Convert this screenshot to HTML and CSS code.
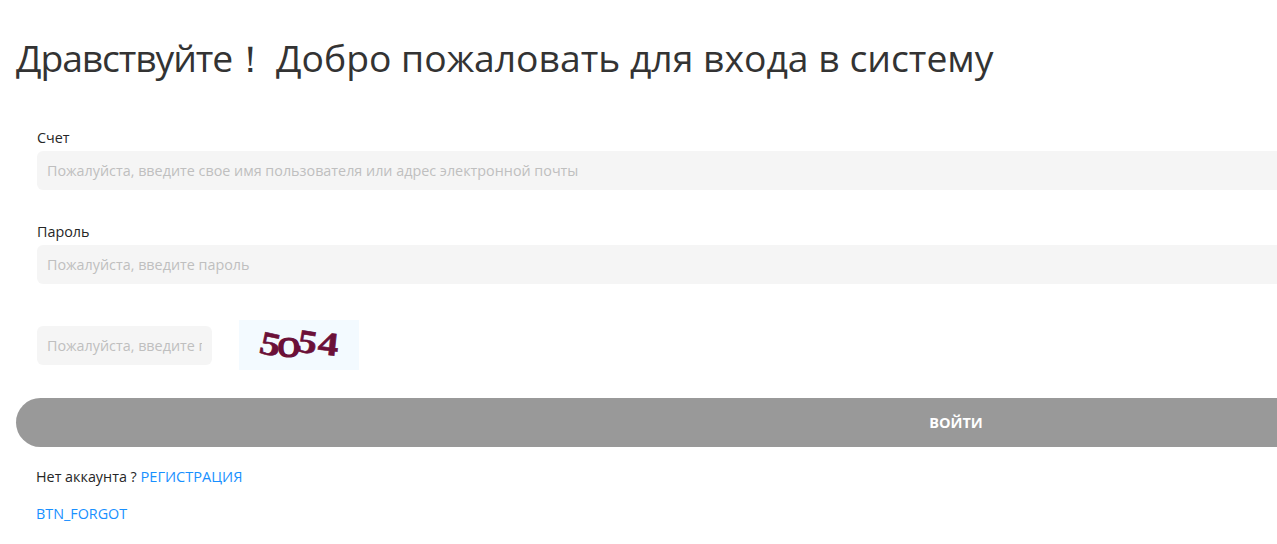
FILE: index.html
```html
<!DOCTYPE html>
<html lang="ru">
<head>
    <meta charset="UTF-8">
    <meta name="viewport" content="width=device-width, initial-scale=1.0">
    <title>Вход</title>
    <link rel="stylesheet" href="styles.css">
</head>
<body>
    <div class="login">
        <h1 class="login-title"><span class="greeting">Дравствуйте！</span>Добро пожаловать для входа в систему</h1>
        <form class="login-form">
            <div class="field">
                <label class="field-label" for="account">Счет</label>
                <input class="field-input" id="account" type="text" placeholder="Пожалуйста, введите свое имя пользователя или адрес электронной почты">
            </div>
            <div class="field">
                <label class="field-label" for="password">Пароль</label>
                <input class="field-input" id="password" type="password" placeholder="Пожалуйста, введите пароль">
            </div>
            <div class="captcha-row">
                <input class="field-input captcha-input" type="text" placeholder="Пожалуйста, введите проверочный код">
                <div class="captcha-img">
                    <span class="d1">5</span><span class="d2">0</span><span class="d3">5</span><span class="d4">4</span>
                </div>
            </div>
            <button class="submit-btn" type="button">ВОЙТИ</button>
        </form>
        <p class="login-link">Нет аккаунта ? <a href="#">РЕГИСТРАЦИЯ</a></p>
        <p class="login-link forgot"><a href="#">BTN_FORGOT</a></p>
    </div>
</body>
</html>
```

FILE: styles.css
```css
html, body {
    margin: 0;
    height: 100%;
    overflow: hidden;
    background: #fff;
}
body {
    font-family: "Open Sans", "Noto Sans", sans-serif;
    font-size: 14.35px;
    color: #333;
}
.login {
    width: 1880px;
    margin-left: 16px;
    padding-top: 32px;
}
.login-title {
    margin: 0;
    font-size: 37.3px;
    font-weight: 400;
    line-height: 52px;
    white-space: nowrap;
}
.greeting {
    display: inline-block;
    width: 260px;
    letter-spacing: -1.1px;
}
.login-form {
    margin-top: 44px;
}
.field {
    padding-left: 21px;
    margin-bottom: 32px;
}
.field-label {
    display: block;
    height: 20px;
    line-height: 20px;
    margin-bottom: 3px;
    color: #262626;
}
.field-input {
    display: block;
    box-sizing: border-box;
    width: 100%;
    height: 39px;
    padding: 0 10px;
    border: none;
    outline: none;
    border-radius: 6px;
    background: #f5f5f5;
    font-family: inherit;
    font-size: 14.35px;
}
.field-input::placeholder {
    color: #bfbfbf;
    opacity: 1;
}
.captcha-row {
    display: flex;
    align-items: center;
    gap: 27px;
    padding-left: 21px;
    margin-top: 36px;
}
.captcha-input {
    width: 175px;
}
.captcha-img {
    display: flex;
    justify-content: center;
    align-items: center;
    width: 120px;
    height: 50px;
    background: #f3faff;
    color: #6b1038;
    font-family: "Liberation Serif", serif;
    font-size: 33px;
    font-weight: 700;
    line-height: 1;
    -webkit-text-stroke: 0.6px #6b1038;
}
.captcha-img span {
    display: block;
}
.captcha-img .d1 {
    transform: translateY(-1px) rotate(12deg) scaleX(1.25);
    margin-right: 3px;
}
.captcha-img .d2 {
    transform: translateY(3px) scaleX(1.45);
    font-family: "Liberation Sans", sans-serif;
    font-size: 28px;
    font-weight: 400;
    -webkit-text-stroke: 1.2px #6b1038;
    margin-right: 2px;
}
.captcha-img .d3 {
    transform: translateY(-3px) rotate(10deg) scaleX(1.2);
    margin-right: 4px;
}
.captcha-img .d4 {
    transform: translateY(-1px) rotate(6deg) scaleX(1.25);
}
.submit-btn {
    display: block;
    width: 100%;
    height: 49px;
    margin-top: 28px;
    border: none;
    border-radius: 25px;
    background: #999;
    color: #fff;
    font-family: inherit;
    font-size: 14.5px;
    font-weight: 700;
    padding-bottom: 2px;
}
.login-link {
    margin: 19px 0 0 20px;
    line-height: 20px;
    color: #262626;
}
.forgot {
    margin-top: 17px;
}
.login-link a {
    color: #1890ff;
    text-decoration: none;
    font-size: 14.6px;
}
.forgot a {
    font-size: 14.35px;
}
```
